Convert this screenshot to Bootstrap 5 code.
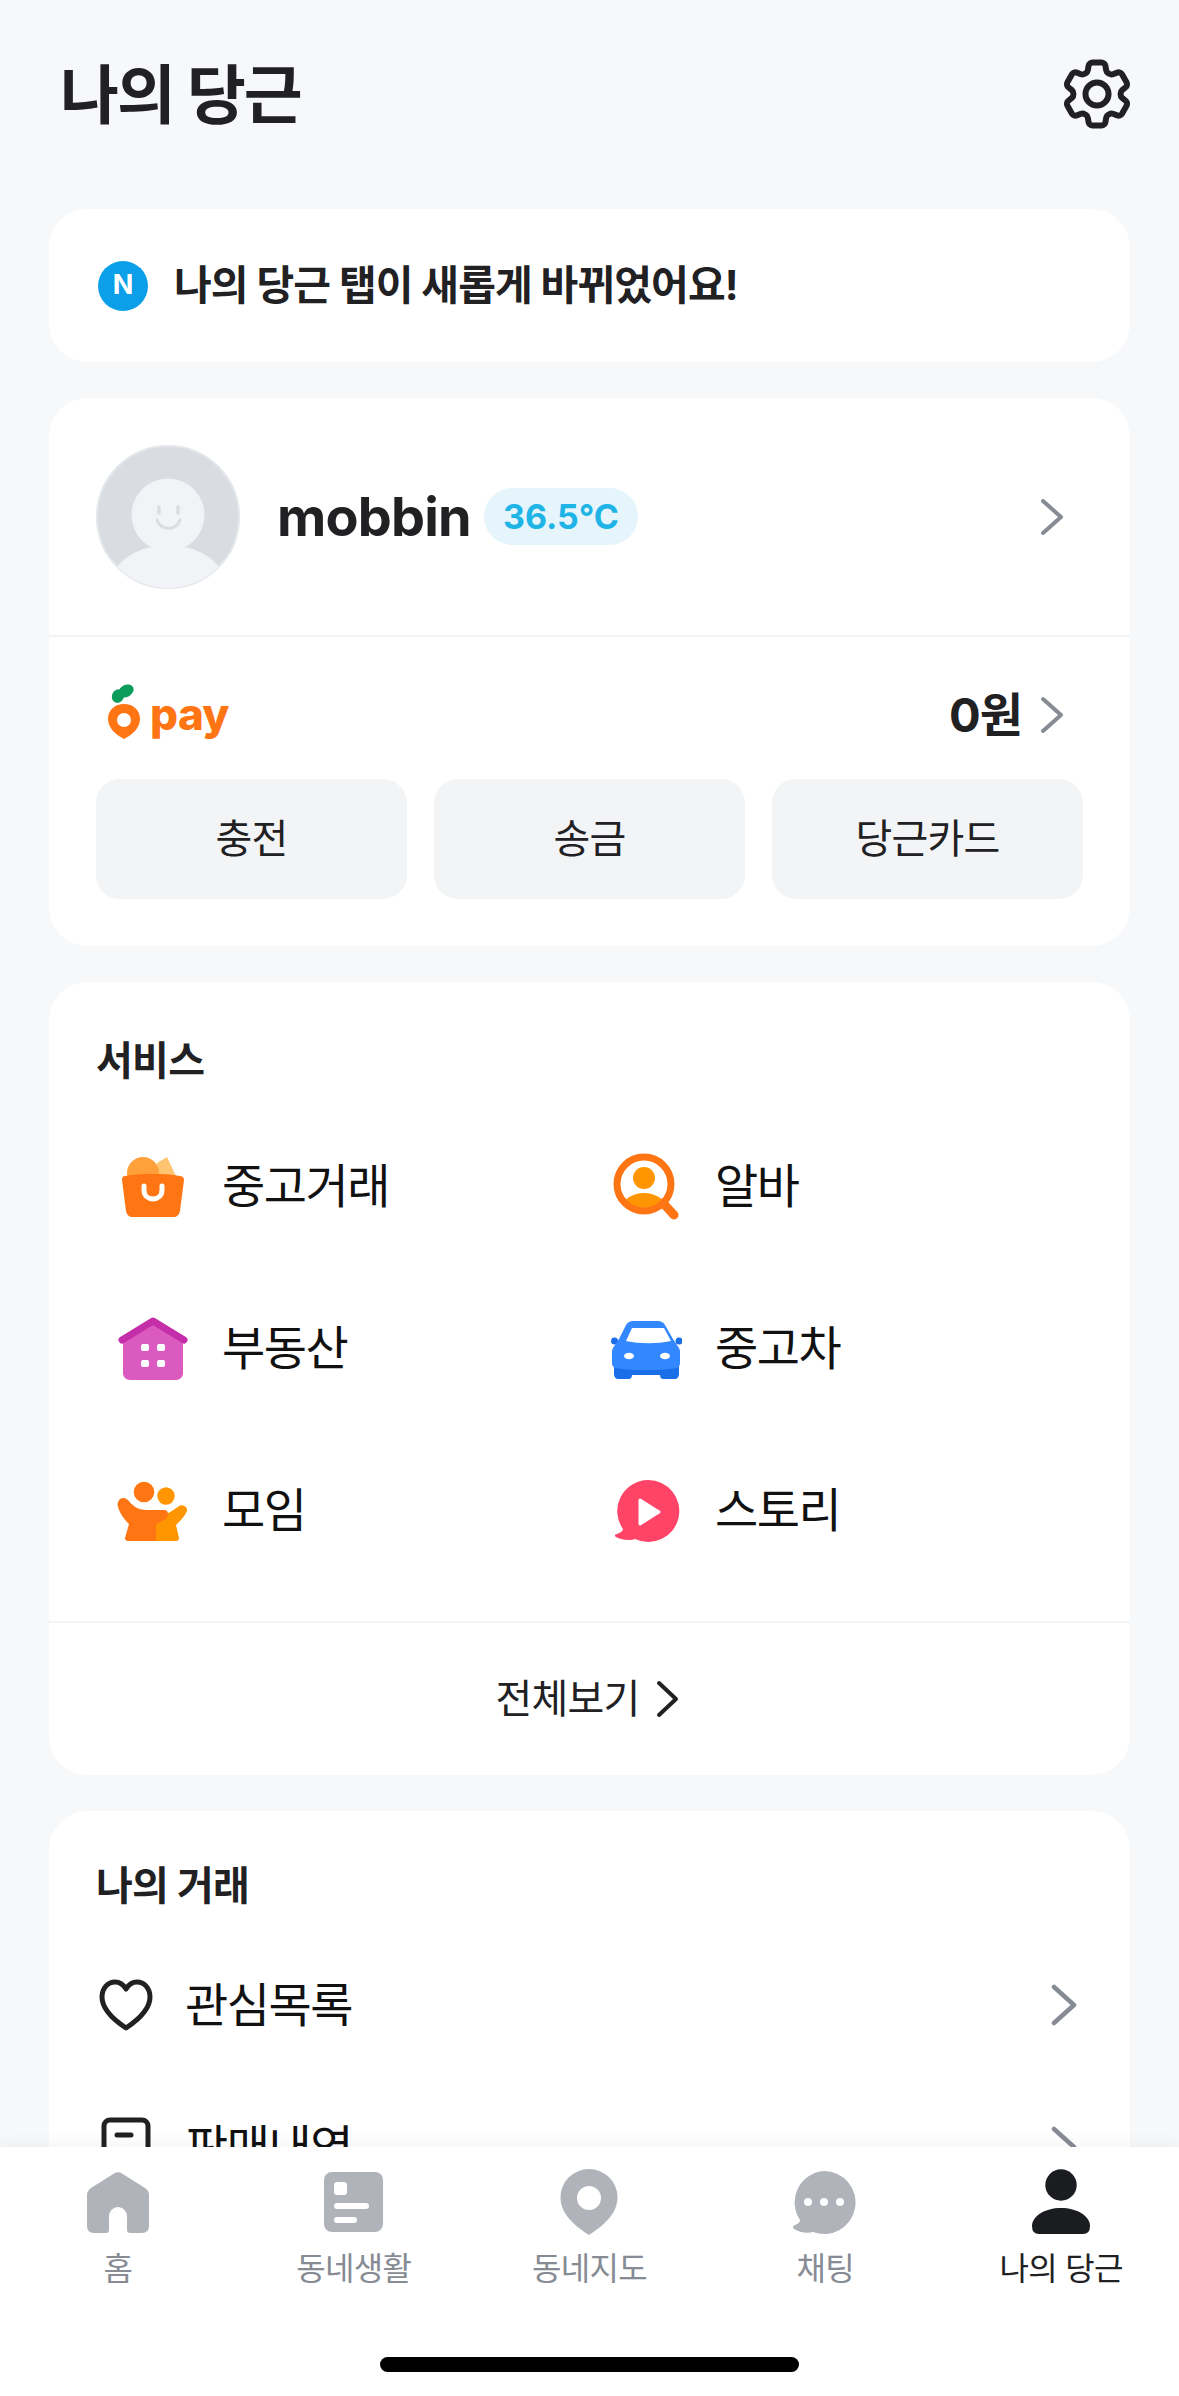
<!DOCTYPE html>
<html lang="ko">

<head>
    <meta charset="UTF-8">
    <meta name="viewport" content="width=device-width, initial-scale=1.0">
    <title>나의 당근</title>
    <link href="https://cdn.jsdelivr.net/npm/bootstrap@5.3.1/dist/css/bootstrap.min.css" rel="stylesheet">
    <style>
        body {
            background: #f7f8fa;
            color: #212124;
            font-family: "Inter", "Noto Sans CJK KR", sans-serif;
            overflow: hidden;
        }

        .screen { width: 1179px; height: 2396px; }
        .scroll-area { height: 2147px; overflow: hidden; padding: 0 49px 0 49px; }
        .top-head { height: 209px; padding: 0 0 25px 11px; }
        .top-title { font-size: 64px; font-weight: 700; letter-spacing: -2px; line-height: 1; margin: 6px 0 0; }
        .gear { margin-right: -9px; margin-top: 4px; }

        .sheet { border: 0; border-radius: 38px; background: #fff; margin-bottom: 36px; }
        .notice { height: 153px; padding-left: 49px; gap: 26px; }
        .n-dot { width: 50px; height: 50px; background: #0a9fe8; color: #fff; font-size: 27px; font-weight: 700; }
        .notice-text { font-size: 41px; font-weight: 700; letter-spacing: -.9px; }

        .profile { height: 237px; padding: 0 66px 0 47px; }
        .who { font-size: 54px; font-weight: 700; letter-spacing: -.8px; margin-left: 37px; }
        .temp { background: #e5f5fb; color: #1fb4e6; font-size: 34px; font-weight: 700; height: 57px; padding: 0 19px; border-radius: 29px; margin-left: 13px; }
        .sep { height: 2px; background: #f2f4f6; }
        .pay-block { height: 309px; padding: 46px 47px 0; }
        .pay-row { height: 96px; padding: 0 19px 0 11px; }
        .pay-word { font-family: "Inter", sans-serif; font-size: 44px; font-weight: 800; color: #ff7514; letter-spacing: -.6px; line-height: 1; margin: 0 0 3px 9px; }
        .pay-amount { margin-top: -3px; }
        .won { font-size: 47px; font-weight: 700; margin-right: 18px; letter-spacing: -1px; }
        .pay-actions { gap: 27px; }
        .pay-btn { flex: 1; height: 120px; background: #f2f4f6; border: 0; border-radius: 24px; font-size: 40px; color: #212124; letter-spacing: -.8px; }

        .sec-title { font-size: 40px; font-weight: 700; letter-spacing: -.7px; line-height: 1; margin: 0; }
        .svc-top { padding: 59px 47px 0; }
        .svc-grid { display: grid; grid-template-columns: 493px 1fr; padding: 24px 0 30px 68px; }
        .svc-item { height: 162px; gap: 33px; font-size: 47px; color: #111; letter-spacing: -1.5px; }
        .see-all { height: 152px; font-size: 40px; gap: 15px; letter-spacing: -.8px; padding-right: 5px; }

        .deal-top { padding: 55px 47px 0; }
        .deal-row { height: 142px; padding: 0 53px 0 47px; font-size: 47px; color: #111; letter-spacing: -1.5px; gap: 29px; }
        .deal-list { padding-top: 28px; }
        .deal-icon { width: 60px; }

        .tabbar { height: 249px; background: #fff; box-shadow: 0 -6px 14px rgba(0, 0, 0, .035); position: relative; }
        .tab-cell { flex: 1; padding-top: 19px; font-size: 32px; color: #868b94; letter-spacing: -.7px; line-height: 1.2; }
        .tab-cell.on { color: #212124; }
        .tab-cell svg { margin-bottom: 12px; }
        .home-bar { width: 419px; height: 15px; background: #000; border-radius: 8px; margin: 0 auto 24px; }
    </style>
</head>

<body>
    <div class="screen d-flex flex-column">
        <div class="scroll-area">
            <!-- header -->
            <div class="top-head d-flex align-items-center justify-content-between">
                <h1 class="top-title">나의 당근</h1>
                <svg class="gear" width="84" height="84" viewBox="0 0 24 24" fill="none" stroke="#212124" stroke-width="1.7" stroke-linejoin="round">
                    <path d="M9.594 3.94c.09-.542.56-.94 1.11-.94h2.593c.55 0 1.02.398 1.11.94l.213 1.281c.063.374.313.686.645.87.074.04.147.083.22.127.325.196.72.257 1.075.124l1.217-.456a1.125 1.125 0 0 1 1.37.49l1.296 2.247a1.125 1.125 0 0 1-.26 1.431l-1.003.827c-.293.241-.438.613-.43.992a7.723 7.723 0 0 1 0 .255c-.008.378.137.75.43.991l1.004.827c.424.35.534.955.26 1.43l-1.298 2.247a1.125 1.125 0 0 1-1.369.491l-1.217-.456c-.355-.133-.75-.072-1.076.124a6.47 6.47 0 0 1-.22.128c-.331.183-.581.495-.644.869l-.213 1.281c-.09.543-.56.94-1.11.94h-2.594c-.55 0-1.019-.398-1.11-.94l-.213-1.281c-.062-.374-.312-.686-.644-.87a6.52 6.52 0 0 1-.22-.127c-.325-.196-.72-.257-1.076-.124l-1.217.456a1.125 1.125 0 0 1-1.369-.49l-1.297-2.247a1.125 1.125 0 0 1 .26-1.431l1.004-.827c.292-.24.437-.613.43-.991a6.932 6.932 0 0 1 0-.255c.007-.38-.138-.751-.43-.992l-1.004-.827a1.125 1.125 0 0 1-.26-1.43l1.297-2.247a1.125 1.125 0 0 1 1.37-.491l1.216.456c.356.133.751.072 1.076-.124.072-.044.146-.086.22-.128.332-.183.582-.495.644-.869l.214-1.28Z"/>
                    <circle cx="12" cy="12" r="3.300"/>
                </svg>
            </div>

            <!-- notice -->
            <div class="card sheet notice flex-row align-items-center">
                <span class="n-dot rounded-circle d-flex align-items-center justify-content-center">N</span>
                <span class="notice-text">나의 당근 탭이 새롭게 바뀌었어요!</span>
            </div>

            <!-- profile + pay -->
            <div class="card sheet">
                <div class="profile d-flex align-items-center">
                    <svg width="144" height="144" viewBox="0 0 144 144">
                        <defs><clipPath id="avatarClip"><circle cx="72" cy="72" r="71"/></clipPath></defs>
                        <circle cx="72" cy="72" r="71" fill="#d9dde2" stroke="#e4e7ea" stroke-width="2"/>
                        <g clip-path="url(#avatarClip)">
                            <ellipse cx="72" cy="142" rx="58" ry="42" fill="#f2f3f6"/>
                            <circle cx="72" cy="70" r="36.5" fill="#f2f3f6"/>
                        </g>
                        <path d="M63 62v6M82 62v6" stroke="#d9dde2" stroke-width="3.5" stroke-linecap="round"/>
                        <path d="M61 75c4 11 19 11 23 0" fill="none" stroke="#d9dde2" stroke-width="3" stroke-linecap="round"/>
                    </svg>
                    <span class="who">mobbin</span>
                    <span class="temp d-inline-flex align-items-center">36.5°C</span>
                    <svg class="ms-auto" width="24" height="38" viewBox="0 0 24 38" fill="none" stroke="#868b94" stroke-width="4" stroke-linecap="round" stroke-linejoin="round"><path d="M3 3l18 16L3 35"/></svg>
                </div>
                <div class="sep"></div>
                <div class="pay-block">
                    <div class="pay-row d-flex align-items-start justify-content-between">
                        <div class="d-flex align-items-end">
                            <svg width="34" height="56" viewBox="0 0 34 56">
                                <ellipse cx="11" cy="13" rx="6" ry="7" transform="rotate(25 11 13)" fill="#0a9c5a"/>
                                <ellipse cx="19" cy="8" rx="8" ry="6" transform="rotate(-30 19 8)" fill="#0a9c5a"/>
                                <path fill-rule="evenodd" d="M17 21c9 0 16 6 16 15 0 9-8 16-16 20C9 52 1 45 1 36c0-9 7-15 16-15zm0 9a7 7 0 1 0 0 14 7 7 0 0 0 0-14z" fill="#ff7514"/>
                            </svg>
                            <span class="pay-word">pay</span>
                        </div>
                        <div class="pay-amount d-flex align-items-center">
                            <span class="won">0원</span>
                            <svg width="24" height="38" viewBox="0 0 24 38" fill="none" stroke="#868b94" stroke-width="4" stroke-linecap="round" stroke-linejoin="round"><path d="M3 3l18 16L3 35"/></svg>
                        </div>
                    </div>
                    <div class="pay-actions d-flex">
                        <button class="btn pay-btn">충전</button>
                        <button class="btn pay-btn">송금</button>
                        <button class="btn pay-btn">당근카드</button>
                    </div>
                </div>
            </div>

            <!-- services -->
            <div class="card sheet">
                <div class="svc-top"><h2 class="sec-title">서비스</h2></div>
                <div class="svc-grid">
                    <div class="svc-item d-flex align-items-center">
                        <svg width="72" height="72" viewBox="0 0 72 72">
                            <path d="M40 13l10-6 9 19H40z" fill="#ffc470"/>
                            <circle cx="26" cy="23" r="16" fill="#ffa03a"/>
                            <path d="M8 26c18-3 38-3 55 0 2 0 4 1 4 4l-4 31c-1 4-3 6-7 6H16c-4 0-6-2-7-6L5 30c0-3 1-4 3-4z" fill="#ff7514"/>
                            <path d="M27 36v4c0 12 18 12 18 0v-4" fill="none" stroke="#fff" stroke-width="5" stroke-linecap="round"/>
                        </svg>
                        <span>중고거래</span>
                    </div>
                    <div class="svc-item d-flex align-items-center">
                        <svg width="72" height="72" viewBox="0 0 72 72">
                            <defs><clipPath id="lensClip"><circle cx="34" cy="34" r="24"/></clipPath></defs>
                            <path d="M53 53l11 12" stroke="#ff7514" stroke-width="9" stroke-linecap="round"/>
                            <circle cx="34" cy="28" r="11" fill="#ff9500"/>
                            <ellipse cx="34" cy="58" rx="22" ry="15" fill="#ff9500" clip-path="url(#lensClip)"/>
                            <circle cx="34" cy="34" r="27" fill="none" stroke="#ff7514" stroke-width="7"/>
                        </svg>
                        <span>알바</span>
                    </div>
                    <div class="svc-item d-flex align-items-center">
                        <svg width="72" height="72" viewBox="0 0 72 72">
                            <path d="M6 24L36 9l30 15v37c0 4-3 7-7 7H13c-4 0-7-3-7-7z" fill="#da5abf"/>
                            <path d="M5 28L36 9l31 19" fill="none" stroke="#c42ea8" stroke-width="7" stroke-linecap="round" stroke-linejoin="round"/>
                            <rect x="24" y="32" width="8" height="7" rx="2" fill="#fff"/><rect x="40" y="32" width="8" height="7" rx="2" fill="#fff"/>
                            <rect x="24" y="48" width="8" height="7" rx="2" fill="#fff"/><rect x="40" y="48" width="8" height="7" rx="2" fill="#fff"/>
                        </svg>
                        <span>부동산</span>
                    </div>
                    <div class="svc-item d-flex align-items-center">
                        <svg width="72" height="72" viewBox="0 0 72 72">
                            <path d="M4 54c0-2 0-3 1-3h62c1 0 2 1 2 3v8c0 3-2 5-4 5H53c-2 0-3-2-3-4H22c0 2-1 4-3 4H8c-2 0-4-2-4-5z" fill="#1a6fe8"/>
                            <circle cx="4.500" cy="29" r="3.500" fill="#1a6fe8"/><circle cx="69" cy="29" r="3.500" fill="#1a6fe8"/>
                            <path d="M27 9h21c3 0 5 1 7 4l8 14 6 9c1 2 1 3 1 5v10c0 2-1 4-3 5-20 3-42 3-62 0-2-1-3-3-3-5V41c0-2 0-3 1-5l6-9 7-14c2-3 4-4 7-4z" fill="#3388ff"/>
                            <path d="M22 16h32l7 13c-15 3-30 3-45 0z" fill="#fff"/>
                            <ellipse cx="19" cy="44" rx="5" ry="3.200" fill="#fff"/><ellipse cx="55" cy="44" rx="5" ry="3.200" fill="#fff"/>
                        </svg>
                        <span>중고차</span>
                    </div>
                    <div class="svc-item d-flex align-items-center">
                        <svg width="72" height="72" viewBox="0 0 72 72">
                            <circle cx="27" cy="18" r="10.300" fill="#ff7514"/>
                            <circle cx="49" cy="22" r="8.700" fill="#ff9500"/>
                            <path d="M39 42c9 0 15-4 23-10 3-2 9 1 8 5-2 5-7 10-11 14l3 13c0 2-1 3-3 3H39z" fill="#ff9500"/>
                            <path d="M3 25c3-2 6-1 8 1 4 5 9 10 19 10h17c3 0 4 2 4 4 0 3-2 5-4 6-3 1-6 3-8 5v16H11c-2 0-3-1-3-3l4-14C8 46 3 40 1 33c-1-3 0-6 2-8z" fill="#ff7514"/>
                        </svg>
                        <span>모임</span>
                    </div>
                    <div class="svc-item d-flex align-items-center">
                        <svg width="72" height="72" viewBox="0 0 72 72">
                            <path d="M38 6a31 31 0 1 1-13 59c-5 2-14 1-19-2-2-1-1-3 1-3 3-1 6-3 6-5A31 31 0 0 1 38 6z" fill="#ff4468"/>
                            <path d="M30 26l19 12-19 12z" fill="#fff" stroke="#fff" stroke-width="3" stroke-linejoin="round"/>
                        </svg>
                        <span>스토리</span>
                    </div>
                </div>
                <div class="sep"></div>
                <div class="see-all d-flex align-items-center justify-content-center">
                    <span>전체보기</span>
                    <svg width="24" height="38" viewBox="0 0 24 38" fill="none" stroke="#212124" stroke-width="4" stroke-linecap="round" stroke-linejoin="round"><path d="M4 3l17 16L4 35"/></svg>
                </div>
            </div>

            <!-- my deals -->
            <div class="card sheet">
                <div class="deal-top"><h2 class="sec-title">나의 거래</h2></div>
                <div class="deal-list">
                    <div class="deal-row d-flex align-items-center">
                        <svg class="deal-icon" width="60" height="54" viewBox="0 0 60 54" fill="none" stroke="#212124" stroke-width="5" stroke-linejoin="round"><path d="M30 50C15 40 6 30 6 19 6 10 12 4 19 4c5 0 8 2 11 7 3-5 6-7 11-7 7 0 13 6 13 15 0 11-9 21-24 31z"/></svg>
                        <span>관심목록</span>
                        <svg class="ms-auto" width="26" height="42" viewBox="0 0 26 42" fill="none" stroke="#868b94" stroke-width="4.500" stroke-linecap="round" stroke-linejoin="round"><path d="M3 3l20 18L3 39"/></svg>
                    </div>
                    <div class="deal-row d-flex align-items-center">
                        <svg class="deal-icon" width="60" height="60" viewBox="0 0 60 60" fill="none" stroke="#212124" stroke-width="5" stroke-linejoin="round"><rect x="8" y="3" width="44" height="54" rx="6"/><path d="M21 18h14" stroke-linecap="round"/></svg>
                        <span>판매내역</span>
                        <svg class="ms-auto" width="26" height="42" viewBox="0 0 26 42" fill="none" stroke="#868b94" stroke-width="4.500" stroke-linecap="round" stroke-linejoin="round"><path d="M3 3l20 18L3 39"/></svg>
                    </div>
                </div>
            </div>
        </div>

        <!-- bottom tabs -->
        <div class="tabbar d-flex flex-column">
            <div class="d-flex flex-grow-1">
                <div class="tab-cell d-flex flex-column align-items-center">
                    <svg width="72" height="72" viewBox="0 0 72 72" fill="#b0b3ba"><path d="M32 7.500Q36 5 40 7.500L63 22Q67 25 67 29V60Q67 67 60 67H48Q45 67 45 64V50A9 9 0 0 0 27 50V64Q27 67 24 67H12Q5 67 5 60V29Q5 25 9 22Z"/></svg>
                    <span>홈</span>
                </div>
                <div class="tab-cell d-flex flex-column align-items-center">
                    <svg width="72" height="72" viewBox="0 0 72 72"><rect x="6" y="6" width="59" height="60" rx="8" fill="#b0b3ba"/><rect x="16" y="16" width="13" height="13" rx="3" fill="#fff"/><rect x="16" y="37" width="35" height="6" rx="3" fill="#fff"/><rect x="16" y="51" width="23" height="6" rx="3" fill="#fff"/></svg>
                    <span>동네생활</span>
                </div>
                <div class="tab-cell d-flex flex-column align-items-center">
                    <svg width="72" height="72" viewBox="0 0 72 72" fill="#b0b3ba"><path fill-rule="evenodd" d="M36 3A28.500 28.500 0 0 1 64.500 31.500C64.500 48 50 60 36 69 22 60 7.500 48 7.500 31.500A28.500 28.500 0 0 1 36 3zM36 20a12 12 0 1 0 0 24 12 12 0 0 0 0-24z"/></svg>
                    <span>동네지도</span>
                </div>
                <div class="tab-cell d-flex flex-column align-items-center">
                    <svg width="72" height="72" viewBox="0 0 72 72"><path d="M35 5a31.500 31.500 0 1 1-11 61c-6 2-14 0-19-3-2-2-1-3 1-4 3-1 5-3 5-5A31.500 31.500 0 0 1 35 5z" fill="#b0b3ba"/><circle cx="19" cy="36" r="4" fill="#fff"/><circle cx="35" cy="36" r="4" fill="#fff"/><circle cx="51" cy="36" r="4" fill="#fff"/></svg>
                    <span>채팅</span>
                </div>
                <div class="tab-cell on d-flex flex-column align-items-center">
                    <svg width="72" height="72" viewBox="0 0 72 72" fill="#1a1c20"><circle cx="36" cy="19" r="15.700"/><path d="M7 60C7 50 20 42 36 42S65 50 65 60Q65 68 58 68H14Q7 68 7 60Z"/></svg>
                    <span>나의 당근</span>
                </div>
            </div>
            <div class="home-bar"></div>
        </div>
    </div>

    <script src="https://cdn.jsdelivr.net/npm/bootstrap@5.3.1/dist/js/bootstrap.bundle.min.js"></script>
</body>

</html>
